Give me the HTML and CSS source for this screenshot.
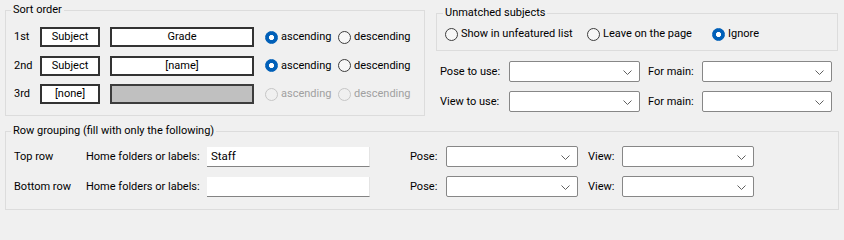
FILE: index.html
```html
<!DOCTYPE html>
<html lang="en">
<head>
<meta charset="utf-8">
<title>Sort options</title>
<link rel="stylesheet" href="styles.css">
</head>
<body>
<div class="page">
  <div class="top">
    <section class="group sort">
      <div class="group-title">Sort order</div>
      <div class="sort-grid">
        <span class="ord">1st</span>
        <span class="box">Subject</span>
        <span class="box wide">Grade</span>
        <span class="radio"><span class="dot checked"></span>ascending</span>
        <span class="radio"><span class="dot"></span>descending</span>

        <span class="ord">2nd</span>
        <span class="box">Subject</span>
        <span class="box wide">[name]</span>
        <span class="radio"><span class="dot checked"></span>ascending</span>
        <span class="radio"><span class="dot"></span>descending</span>

        <span class="ord">3rd</span>
        <span class="box">[none]</span>
        <span class="box wide disabled"></span>
        <span class="radio off"><span class="dot"></span>ascending</span>
        <span class="radio off"><span class="dot"></span>descending</span>
      </div>
    </section>

    <div class="right">
      <section class="group unmatched">
        <div class="group-title">Unmatched subjects</div>
        <div class="radio-row">
          <span class="radio r1"><span class="dot"></span>Show in unfeatured list</span>
          <span class="radio r2"><span class="dot"></span>Leave on the page</span>
          <span class="radio"><span class="dot checked"></span>Ignore</span>
        </div>
      </section>
      <div class="combo-grid">
        <span class="lbl">Pose to use:</span>
        <span class="combo"><svg class="chev" width="9" height="5" viewBox="0 0 9 5"><polyline points="0.5,0.5 4.5,4.5 8.5,0.5"/></svg></span>
        <span class="lbl pad">For main:</span>
        <span class="combo"><svg class="chev" width="9" height="5" viewBox="0 0 9 5"><polyline points="0.5,0.5 4.5,4.5 8.5,0.5"/></svg></span>

        <span class="lbl">View to use:</span>
        <span class="combo"><svg class="chev" width="9" height="5" viewBox="0 0 9 5"><polyline points="0.5,0.5 4.5,4.5 8.5,0.5"/></svg></span>
        <span class="lbl pad">For main:</span>
        <span class="combo"><svg class="chev" width="9" height="5" viewBox="0 0 9 5"><polyline points="0.5,0.5 4.5,4.5 8.5,0.5"/></svg></span>
      </div>
    </div>
  </div>

  <section class="group rowgroup">
    <div class="group-title">Row grouping (fill with only the following)</div>
    <div class="row-grid">
      <span class="lbl">Top row</span>
      <span class="lbl">Home folders or labels:</span>
      <span class="textbox">Staff</span>
      <span class="lbl pose">Pose:</span>
      <span class="combo"><svg class="chev" width="9" height="5" viewBox="0 0 9 5"><polyline points="0.5,0.5 4.5,4.5 8.5,0.5"/></svg></span>
      <span class="lbl view">View:</span>
      <span class="combo"><svg class="chev" width="9" height="5" viewBox="0 0 9 5"><polyline points="0.5,0.5 4.5,4.5 8.5,0.5"/></svg></span>

      <span class="lbl">Bottom row</span>
      <span class="lbl">Home folders or labels:</span>
      <span class="textbox"></span>
      <span class="lbl pose">Pose:</span>
      <span class="combo"><svg class="chev" width="9" height="5" viewBox="0 0 9 5"><polyline points="0.5,0.5 4.5,4.5 8.5,0.5"/></svg></span>
      <span class="lbl view">View:</span>
      <span class="combo"><svg class="chev" width="9" height="5" viewBox="0 0 9 5"><polyline points="0.5,0.5 4.5,4.5 8.5,0.5"/></svg></span>
    </div>
  </section>
</div>
</body>
</html>
```

FILE: styles.css
```css
html, body {
  margin: 0;
  padding: 0;
  background: #f0f0f0;
}

body {
  font-family: Roboto, "Liberation Sans", sans-serif;
  font-size: 11px;
  line-height: 16px;
  color: #000;
  width: 844px;
  height: 214px;
  overflow: hidden;
}

.page {
  padding-top: 10px;
  padding-left: 5px;
}

.top {
  display: flex;
  align-items: flex-start;
}

.group {
  border: 1px solid #dcdcdc;
  box-sizing: border-box;
}

.group-title {
  width: fit-content;
  margin: -9px 0 0 5px;
  padding: 0 2px;
  line-height: 16px;
  background: #f0f0f0;
}

/* Sort order */
.sort {
  width: 420px;
  height: 106px;
}

.sort-grid {
  display: grid;
  grid-template-columns: 26px 70px 155px 73px auto;
  grid-template-rows: 20px 20px 20px;
  row-gap: 8.5px;
  align-items: center;
  margin-top: 9px;
  padding-left: 8px;
}

.ord {
  line-height: 16px;
}

.box {
  box-sizing: border-box;
  width: 60px;
  height: 20px;
  border: 2px solid #333;
  background: #fff;
  text-align: center;
  line-height: 16px;
}

.box.wide {
  width: 144px;
}

.box.disabled {
  background: #c0c0c0;
  border-color: #3c3c3c;
}

.radio {
  display: flex;
  align-items: center;
  white-space: nowrap;
  line-height: 16px;
}

.dot {
  box-sizing: border-box;
  width: 13px;
  height: 13px;
  border-radius: 50%;
  border: 1px solid #3d3d3d;
  background: #f7f7f7;
  margin-right: 3px;
  flex: none;
}

.dot.checked {
  border-color: #005fb8;
  background: radial-gradient(circle at center, #fff 0, #fff 2.2px, #005fb8 2.9px);
}

.radio.off {
  color: #a0a0a0;
}

.radio.off .dot {
  border-color: #c6c6c6;
  background: #f0f0f0;
}

/* Right column */
.right {
  width: 402px;
  margin-left: 11px;
  margin-top: 3px;
}

.unmatched {
  width: 402px;
  height: 38px;
}

.unmatched .group-title {
  margin-left: 6px;
}

.radio-row {
  display: flex;
  margin-top: 5px;
  padding-left: 8px;
}

.radio.r1 {
  width: 142px;
}

.radio.r2 {
  width: 125px;
}

.combo-grid {
  display: grid;
  grid-template-columns: 69px 131px 62px 130px;
  grid-template-rows: 21px 21px;
  row-gap: 9px;
  align-items: center;
  margin-top: 10px;
  padding-left: 4px;
}

.lbl {
  white-space: nowrap;
  line-height: 16px;
}

.lbl.pad {
  padding-left: 8px;
}

.combo {
  box-sizing: border-box;
  height: 21px;
  background: #fff;
  border: 1px solid #878787;
  border-radius: 2px;
  display: flex;
  align-items: center;
  justify-content: flex-end;
  padding-right: 7px;
  padding-top: 1px;
}

.chev {
  display: block;
}

.chev polyline {
  fill: none;
  stroke: #606060;
  stroke-width: 1;
}

/* Row grouping */
.rowgroup {
  width: 834px;
  height: 79px;
  margin-top: 15px;
}

.row-grid {
  display: grid;
  grid-template-columns: 72px 121px 163px 76px 132px 44px 132px;
  grid-template-rows: 21px 21px;
  row-gap: 9px;
  align-items: center;
  margin-top: 7px;
  padding-left: 8px;
}

.lbl.pose {
  padding-left: 40px;
}

.lbl.view {
  padding-left: 10px;
}

.textbox {
  box-sizing: border-box;
  align-self: end;
  height: 20px;
  background: #fff;
  border-bottom: 1px solid #838383;
  border-right: 1px solid #e4e4e4;
  padding-left: 4px;
  line-height: 18px;
  font-size: 11.5px;
}
```
